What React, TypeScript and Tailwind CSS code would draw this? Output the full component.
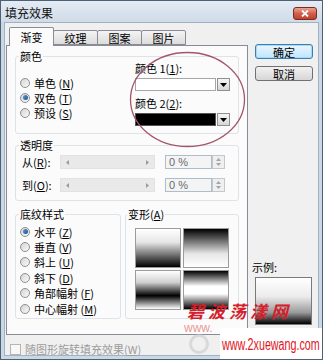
import React from "react";

function Radio({ checked }: { checked?: boolean }) {
  return (
    <span className="w-[10px] h-[10px] rounded-full border border-[#8e8f8f] bg-linear-to-br from-[#d4d4d4] to-[#fafafa] flex items-center justify-center shrink-0">
      {checked && <span className="w-[5px] h-[5px] rounded-full bg-linear-to-br from-[#5e9ad6] to-[#1b4f8f]" />}
    </span>
  );
}

function RadioRow({ label, k, checked, h }: { label: string; k: string; checked?: boolean; h: string }) {
  return (
    <div className={`flex items-center gap-[4px] ${h}`}>
      <Radio checked={checked} />
      <span className="leading-[12px] whitespace-nowrap">
        {label} (<span className="underline">{k}</span>)
      </span>
    </div>
  );
}

function DropArrow() {
  return (
    <svg width="7" height="4" viewBox="0 0 7 4">
      <path d="M0 0 H7 L3.5 4 Z" fill="#000" />
    </svg>
  );
}

function Combo({ dark }: { dark?: boolean }) {
  return (
    <div className="flex w-[95px] h-[13px]">
      <div className={`flex-1 border ${dark ? "border-[#555] bg-black" : "border-[#a6a6a6] bg-white"}`} />
      <div className="w-[13px] ml-[1px] border border-[#8f8f8f] bg-linear-to-b from-[#f6f6f6] to-[#d6d6d6] flex items-center justify-center">
        <DropArrow />
      </div>
    </div>
  );
}

function Slider() {
  return (
    <div className="w-[95px] h-[14px] bg-[#e9e9e9] border border-[#e2e2e2] flex items-center justify-between px-[5px]">
      <svg width="3" height="5" viewBox="0 0 3 5"><path d="M3 0 V5 L0 2.5 Z" fill="#9a9a9a" /></svg>
      <svg width="3" height="5" viewBox="0 0 3 5"><path d="M0 0 V5 L3 2.5 Z" fill="#9a9a9a" /></svg>
    </div>
  );
}

function Spinner() {
  return (
    <div className="w-[60px] h-[14px] flex">
      <div className="flex-1 border border-[#aebdcc] bg-[#f4f4f4] flex items-center pl-[3px] text-[11px] leading-[11px] text-[#6a6a6a] font-['Liberation_Sans',sans-serif]">
        0 %
      </div>
      <div className="w-[13px] border border-[#c3c8cd] bg-[#efefef] flex flex-col items-center justify-around py-[1px]">
        <svg width="5" height="3" viewBox="0 0 5 3"><path d="M0 3 H5 L2.5 0 Z" fill="#a4a4a4" /></svg>
        <svg width="5" height="3" viewBox="0 0 5 3"><path d="M0 0 H5 L2.5 3 Z" fill="#a4a4a4" /></svg>
      </div>
    </div>
  );
}

export default function App() {
  return (
    <div className="relative w-[323px] h-[360px] overflow-hidden border border-[#4e6075] bg-[#cad7e5] flex flex-col font-['Noto_Sans_CJK_SC',sans-serif] text-[11px] leading-[12px] text-black">
      {/* title bar */}
      <div className="h-[21px] shrink-0 flex items-start justify-between pl-[4px] pr-[5px] bg-linear-to-b from-[#e4ecf4] to-[#cfdbe8]">
        <span className="mt-[6px] text-[12px] leading-[12px] text-[#111]">填充效果</span>
        <div className="mt-[6px] w-[24px] h-[13px] rounded-[3px] border border-[#7a2b22] bg-linear-to-b from-[#e9a393] via-[#d2604c] to-[#c0402b] flex items-center justify-center">
          <svg width="8" height="7" viewBox="0 0 8 7">
            <path d="M1 0.5 L7 6.5 M7 0.5 L1 6.5" stroke="#fff" strokeWidth="1.8" />
          </svg>
        </div>
      </div>

      {/* client */}
      <div className="flex-1 mx-[3px] mb-[3px] bg-[#f0f0f0] border border-[#a3b2c3] flex">
        {/* left column */}
        <div className="ml-[1px] pt-[4px] w-[242px] flex flex-col">
          {/* tabs */}
          <div className="h-[19px] flex relative z-10">
            <div className="ml-[3px] w-[45px] h-[19px] border-x border-t border-[#898c95] bg-[#fbfbfb] rounded-t-[2px] flex items-center justify-center pb-[1px]">
              渐变
            </div>
            {["纹理", "图案", "图片"].map((t) => (
              <div
                key={t}
                className="mt-[3px] -ml-px w-[45px] h-[15px] border border-[#898c95] bg-linear-to-b from-[#f4f4f4] to-[#dcdcdc] rounded-t-[2px] flex items-center justify-center"
              >
                {t}
              </div>
            ))}
          </div>

          {/* panel */}
          <div className="-mt-px h-[290px] border border-[#898c95] bg-[#fbfbfb] pl-[8px] flex flex-col">
            {/* 颜色 */}
            <fieldset className="mt-[4px] w-[224px] h-[84px] min-w-0 border border-[#dde3e8] rounded-[3px] pl-[4px]">
              <legend className="-ml-px px-[1px] leading-[12px]">颜色</legend>
              <div className="flex">
                <div className="w-[114px] pt-[13px] flex flex-col">
                  <RadioRow label="单色" k="N" h="h-[15px]" />
                  <RadioRow label="双色" k="T" checked h="h-[15px]" />
                  <RadioRow label="预设" k="S" h="h-[15px]" />
                </div>
                <div className="pl-[1px] flex flex-col">
                  <div className="h-[12px] leading-[12px] whitespace-nowrap">
                    颜色 1(<span className="underline">1</span>):
                  </div>
                  <div className="mt-[4px]">
                    <Combo />
                  </div>
                  <div className="mt-[6px] h-[12px] leading-[12px] whitespace-nowrap">
                    颜色 2(<span className="underline">2</span>):
                  </div>
                  <div className="mt-[4px]">
                    <Combo dark />
                  </div>
                </div>
              </div>
            </fieldset>

            {/* 透明度 */}
            <fieldset className="mt-[5px] w-[224px] h-[62px] min-w-0 border border-[#dde3e8] rounded-[3px] pl-[4px]">
              <legend className="-ml-px px-[1px] leading-[12px]">透明度</legend>
              <div className="mt-[4px] flex items-center h-[14px]">
                <span className="w-[40px] pl-[2px] whitespace-nowrap">
                  从(<span className="underline">R</span>):
                </span>
                <Slider />
                <div className="ml-[10px]">
                  <Spinner />
                </div>
              </div>
              <div className="mt-[9px] flex items-center h-[14px]">
                <span className="w-[40px] pl-[2px] whitespace-nowrap">
                  到(<span className="underline">O</span>):
                </span>
                <Slider />
                <div className="ml-[10px]">
                  <Spinner />
                </div>
              </div>
            </fieldset>

            {/* bottom groups */}
            <div className="mt-[7px] flex gap-[4px] w-[224px]">
              <fieldset className="w-[106px] h-[111px] min-w-0 border border-[#dde3e8] rounded-[3px] pl-[4px]">
                <legend className="-ml-px px-[1px] leading-[12px]">底纹样式</legend>
                <div className="pt-[4px] flex flex-col">
                  <RadioRow label="水平" k="Z" checked h="h-[15.4px]" />
                  <RadioRow label="垂直" k="V" h="h-[15.4px]" />
                  <RadioRow label="斜上" k="U" h="h-[15.4px]" />
                  <RadioRow label="斜下" k="D" h="h-[15.4px]" />
                  <RadioRow label="角部幅射" k="F" h="h-[15.4px]" />
                  <RadioRow label="中心幅射" k="M" h="h-[15.4px]" />
                </div>
              </fieldset>
              <fieldset className="w-[114px] h-[111px] min-w-0 border border-[#dde3e8] rounded-[3px] pl-[2px]">
                <legend className="-ml-px px-[1px] leading-[12px]">
                  变形(<span className="underline">A</span>)
                </legend>
                <div className="mt-[8px] ml-[7px] grid grid-cols-[46px_46px] grid-rows-[40px_40px] gap-[2px]">
                  <div className="border border-[#9c9c9c] bg-[linear-gradient(to_bottom,#ffffff_0%,#e6e6e6_35%,#000000_100%)]" />
                  <div className="border border-[#9c9c9c] bg-[linear-gradient(to_bottom,#000000_0%,#e6e6e6_65%,#ffffff_100%)]" />
                  <div className="border border-[#9c9c9c] bg-[linear-gradient(to_bottom,#ffffff_0%,#d0d0d0_30%,#000000_65%,#ffffff_100%)]" />
                  <div className="border border-[#9c9c9c] bg-[linear-gradient(to_bottom,#000000_0%,#ffffff_40%,#ffffff_60%,#000000_100%)]" />
                </div>
              </fieldset>
            </div>
          </div>

          {/* checkbox */}
          <div className="mt-[8px] ml-[4px] flex items-center gap-[4px]">
            <span className="w-[11px] h-[11px] border border-[#b5b5b5] bg-[#f7f7f7]" />
            <span className="text-[#9c9c9c] leading-[12px] whitespace-nowrap">
              随图形旋转填充效果(<span className="underline">W</span>)
            </span>
          </div>
        </div>

        {/* right column */}
        <div className="ml-[7px] pt-[21px] flex flex-col">
          <div className="w-[58px] h-[15px] rounded-[3px] border border-[#3c7fb1] bg-linear-to-b from-[#eaf6fd] to-[#bee6fd] flex items-center justify-center shadow-[inset_0_0_0_1px_#a7d9f5]">
            确定
          </div>
          <div className="mt-[7px] w-[58px] h-[15px] rounded-[3px] border border-[#707070] bg-linear-to-b from-[#f2f2f2] to-[#d6d6d6] flex items-center justify-center">
            取消
          </div>
          <div className="mt-[180px] -ml-[3px] h-[12px] leading-[12px]">示例:</div>
          <div className="mt-[4px] w-[57px] h-[48px] border border-[#7a7a7a] bg-[linear-gradient(to_bottom,#ffffff_0%,#ececec_40%,#9a9a9a_75%,#000000_100%)]" />
        </div>
      </div>

      {/* red annotation circle */}
      <svg className="absolute left-0 top-0 pointer-events-none" width="323" height="360">
        <ellipse cx="186.5" cy="98.5" rx="57" ry="47" fill="none" stroke="#a3566a" strokeWidth="1.3" />
      </svg>

      {/* watermark */}
      <div className="absolute left-[186px] top-[300px] text-[17px] leading-[20px] tracking-[4px] font-bold italic text-[#d3202a] whitespace-nowrap pointer-events-none">
        碧波荡漾网
      </div>
      <div className="absolute left-[183px] top-[321px] text-[12px] leading-[12px] font-['Liberation_Sans',sans-serif] text-[#e07070] opacity-70 whitespace-nowrap">
        www.
      </div>
      <div className="absolute left-[188px] top-[333px] w-[20px] h-[20px] rounded-full border-[3px] border-[#c9c9c9] opacity-60" />
      <div className="absolute left-[219px] top-[327px] w-[104px] h-[33px] bg-white flex items-center overflow-hidden">
        <span className="ml-[2px] inline-block origin-left scale-x-[0.67] text-[16px] leading-[16px] font-['Liberation_Sans',sans-serif] text-[#e0141c] whitespace-nowrap">
          www.2xuewang.com
        </span>
      </div>
    </div>
  );
}
